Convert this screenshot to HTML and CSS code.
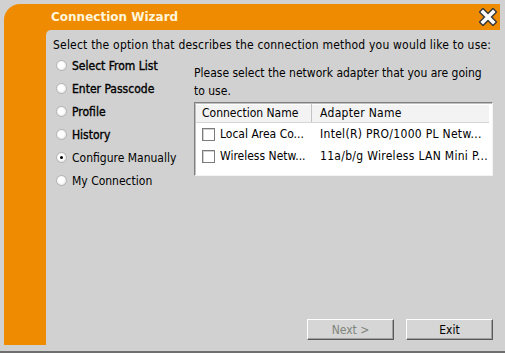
FILE: index.html
```html
<!DOCTYPE html>
<html lang="en">
<head>
    <meta charset="UTF-8">
    <title>Connection Wizard</title>
    <link rel="stylesheet" href="styles.css">
</head>
<body>

    <div class="frame">
        <!-- Title bar -->
        <div class="titlebar">
            <span class="title">Connection Wizard</span>
            <svg class="close" width="18" height="18" viewBox="0 0 18 18">
                <path d="M4 4 L14 14 M14 4 L4 14" stroke="#3a3a3a" stroke-width="6.5" stroke-linecap="square"/>
                <path d="M4 4 L14 14 M14 4 L4 14" stroke="#ffffff" stroke-width="3.6" stroke-linecap="square"/>
            </svg>
        </div>

        <div class="main">
            <div class="panel">
                <p class="intro">Select the option that describes the connection method you would like to use:</p>

                <div class="columns">
                    <ul class="options">
                        <li class="strong"><span class="radio"></span>Select From List</li>
                        <li class="strong"><span class="radio"></span>Enter Passcode</li>
                        <li class="strong"><span class="radio"></span>Profile</li>
                        <li class="strong"><span class="radio"></span>History</li>
                        <li><span class="radio checked"></span>Configure Manually</li>
                        <li><span class="radio"></span>My Connection</li>
                    </ul>

                    <div class="adapters">
                        <p class="hint">Please select the network adapter that you are going to use.</p>
                        <div class="listview">
                            <div class="list-head">
                                <div class="col-name">Connection Name</div>
                                <div class="col-adapter">Adapter Name</div>
                            </div>
                            <div class="list-row">
                                <div class="col-name"><span class="check"></span>Local Area Co...</div>
                                <div class="col-adapter">Intel(R) PRO/1000 PL Netw...</div>
                            </div>
                            <div class="list-row">
                                <div class="col-name"><span class="check"></span>Wireless Netw...</div>
                                <div class="col-adapter">11a/b/g Wireless LAN Mini P...</div>
                            </div>
                        </div>
                    </div>
                </div>

                <div class="buttons">
                    <button class="btn" disabled>Next &gt;</button>
                    <button class="btn">Exit</button>
                </div>
            </div>
        </div>
    </div>

</body>
</html>
```

FILE: styles.css
```css
:root {
    --orange: #ef8b00;
    --panel: #d1d1d1;
    --text: #000;
    --shadow: #808080;
}
html, body {
    margin: 0;
    padding: 0;
}
body {
    width: 505px;
    height: 353px;
    box-sizing: border-box;
    padding: 4px 5px 0 4px;
    background-color: var(--panel);
    border-bottom: 2px solid #6e6e6e;
    font-family: "DejaVu Sans Condensed", "DejaVu Sans", sans-serif;
    font-size: 12px;
    color: var(--text);
    overflow: hidden;
}
.frame {
    height: 341px;
    background-color: var(--orange);
    border-top-left-radius: 16px;
    display: flex;
    flex-direction: column;
}
.titlebar {
    height: 26px;
    display: flex;
    align-items: center;
    justify-content: space-between;
    padding: 0 3px 0 47px;
}
.title {
    font-family: "DejaVu Sans", sans-serif;
    font-weight: bold;
    font-size: 12px;
    color: #fff6dc;
}
.close {
    display: block;
}
.main {
    flex: 1;
    display: flex;
    padding-left: 42px;
}
.panel {
    flex: 1;
    background-color: var(--panel);
    border-top-left-radius: 5px;
    padding: 7px 7px 5px 7px;
    display: flex;
    flex-direction: column;
}
.intro {
    margin: 0;
    line-height: 16px;
    letter-spacing: 0.2px;
    white-space: nowrap;
}
.columns {
    display: flex;
}
.options {
    list-style: none;
    margin: 0;
    padding: 1px 0 0 3px;
    width: 138px;
}
.options li {
    height: 23px;
    display: flex;
    align-items: center;
}
.options li.strong {
    -webkit-text-stroke: 0.35px #000;
}
.radio {
    width: 11px;
    height: 11px;
    border-radius: 50%;
    box-sizing: border-box;
    border: 1px solid #b4b4b4;
    background: radial-gradient(circle at 45% 45%, #ffffff 40%, #e6e6e6 75%, #c8c8c8 100%);
    margin-right: 5px;
    position: relative;
}
.radio.checked::after {
    content: "";
    position: absolute;
    left: 3px;
    top: 3px;
    width: 3px;
    height: 3px;
    border-radius: 50%;
    background-color: #000;
}
.adapters {
    flex: 1;
    padding-top: 11px;
}
.hint {
    margin: 0;
    line-height: 18px;
}
.listview {
    margin-top: 2px;
    width: 299px;
    height: 74px;
    box-sizing: border-box;
    background-color: #fff;
    border: 1px solid;
    border-color: var(--shadow) #f4f4f4 #f4f4f4 var(--shadow);
    box-shadow: inset 1px 1px 0 #c0c0c0;
    padding: 1px 3px 0 1px;
}
.list-head {
    display: flex;
    height: 18px;
    background-color: #f3f3f3;
    border-bottom: 1px solid #d6d6d6;
    box-shadow: inset 0 1px 0 #ffffff;
}
.list-head > div {
    display: flex;
    align-items: center;
}
.list-head .col-name {
    border-right: 1px solid #c4c4c4;
}
.list-row {
    display: flex;
    height: 22px;
}
.list-row > div {
    display: flex;
    align-items: center;
}
.col-name {
    width: 116px;
    padding-left: 6px;
    box-sizing: border-box;
    white-space: nowrap;
}
.col-adapter {
    padding-left: 8px;
    white-space: nowrap;
    letter-spacing: 0.3px;
}
.check {
    width: 13px;
    height: 13px;
    box-sizing: border-box;
    border: 1px solid #7c7c7c;
    box-shadow: inset 1px 1px 0 #d0d0d0;
    background-color: #fff;
    margin-right: 5px;
}
.buttons {
    margin-top: auto;
    display: flex;
    justify-content: flex-end;
    gap: 12px;
}
.btn {
    width: 87px;
    height: 21px;
    font-family: "DejaVu Sans Condensed", "DejaVu Sans", sans-serif;
    font-size: 12px;
    color: #000;
    background-color: #d6d6d6;
    border: 1px solid;
    border-color: #ffffff #5a5a5a #5a5a5a #ffffff;
    box-shadow: inset -1px -1px 0 #a0a0a0;
    padding: 0;
}
.btn:disabled {
    color: #7f857d;
}
```
